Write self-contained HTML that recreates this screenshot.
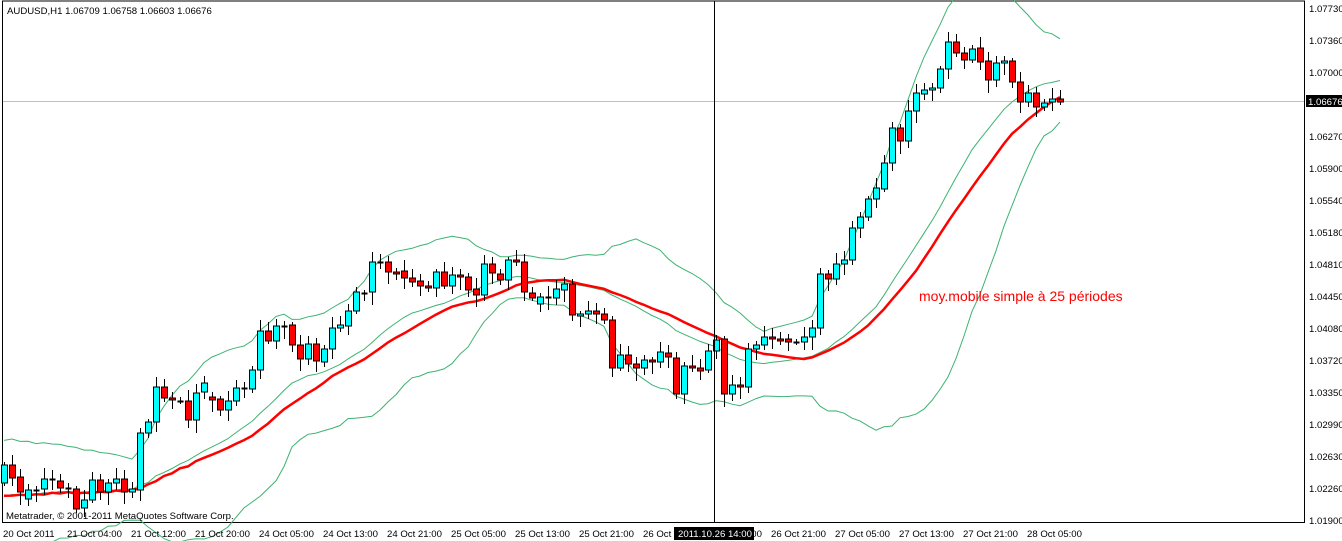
<!DOCTYPE html>
<html><head><meta charset="utf-8"><style>
html,body{margin:0;padding:0;background:#fff;}
body{width:1342px;height:541px;overflow:hidden;position:relative;font-family:"Liberation Sans",sans-serif;}
svg{position:absolute;left:0;top:0;}
text{font-family:"Liberation Sans",sans-serif;font-size:9.6px;fill:#000;}
</style></head><body>
<svg id="s" width="1342" height="541" xmlns="http://www.w3.org/2000/svg">
<rect x="0" y="0" width="1342" height="541" fill="#fff"/>
<line x1="2" y1="1" x2="1305" y2="1" stroke="#000"/>
<line x1="2.5" y1="1" x2="2.5" y2="523" stroke="#000"/>
<line x1="1304.5" y1="1" x2="1304.5" y2="523" stroke="#000"/>
<line x1="2" y1="522.5" x2="1305" y2="522.5" stroke="#000"/>
<line x1="3" y1="101.5" x2="1304" y2="101.5" stroke="#c0c0c0"/>
<g id="bands"></g>
<g id="cd"></g>
<line x1="714.5" y1="1" x2="714.5" y2="523" stroke="#000"/>
<text x="7" y="14">AUDUSD,H1  1.06709 1.06758 1.06603 1.06676</text>
<text x="6" y="519">Metatrader, © 2001-2011 MetaQuotes Software Corp.</text>
<text x="919" y="301" style="font-family:'Liberation Sans',sans-serif;font-size:14px;fill:#ff0000">moy.mobile simple à 25 périodes</text>
<g>
<text x="1309" y="12">1.07730</text>
<text x="1309" y="44">1.07360</text>
<text x="1309" y="76">1.07000</text>
<text x="1309" y="140">1.06270</text>
<text x="1309" y="172">1.05900</text>
<text x="1309" y="204">1.05540</text>
<text x="1309" y="236">1.05180</text>
<text x="1309" y="268">1.04810</text>
<text x="1309" y="300">1.04450</text>
<text x="1309" y="332">1.04080</text>
<text x="1309" y="364">1.03720</text>
<text x="1309" y="396">1.03350</text>
<text x="1309" y="428">1.02990</text>
<text x="1309" y="460">1.02630</text>
<text x="1309" y="492">1.02260</text>
<text x="1309" y="524">1.01900</text>
</g>
<rect x="1306" y="95" width="36" height="12" fill="#000"/>
<text x="1308" y="105" style="fill:#fff">1.06676</text>
<g>
<text x="3" y="537">20 Oct 2011</text>
<text x="67" y="537">21 Oct 04:00</text>
<text x="131" y="537">21 Oct 12:00</text>
<text x="195" y="537">21 Oct 20:00</text>
<text x="259" y="537">24 Oct 05:00</text>
<text x="323" y="537">24 Oct 13:00</text>
<text x="387" y="537">24 Oct 21:00</text>
<text x="451" y="537">25 Oct 05:00</text>
<text x="515" y="537">25 Oct 13:00</text>
<text x="579" y="537">25 Oct 21:00</text>
<text x="643" y="537">26 Oct 06:00</text>
<text x="707" y="537">26 Oct 14:00</text>
<text x="771" y="537">26 Oct 21:00</text>
<text x="835" y="537">27 Oct 05:00</text>
<text x="899" y="537">27 Oct 13:00</text>
<text x="963" y="537">27 Oct 21:00</text>
<text x="1027" y="537">28 Oct 05:00</text>
</g>
<rect x="674" y="527" width="80" height="13" fill="#000"/>
<text x="678" y="537" style="fill:#fff">2011.10.26 14:00</text>
</svg>
<script>
var C=[[483,465],[465,478],[477,492],[499,490],[490,490],[489,479],[479,479],[481,488],[488,488],[489,509],[508,500],[500,480],[480,492],[492,483],[483,479],[479,492],[492,489],[490,433],[433,422],[422,387],[387,398],[398,400],[401,401],[401,420],[420,393],[392,383],[397,400],[399,410],[410,401],[401,388],[388,388],[389,370],[370,331],[331,341],[341,326],[326,326],[325,345],[345,359],[359,344],[344,361],[362,349],[349,328],[328,325],[326,311],[311,292],[293,293],[292,262],[262,262],[262,272],[272,274],
[271,278],[278,282],[281,286],[286,288],[288,272],[272,286],[286,275],[275,277],[277,290],[289,295],[295,264],[264,273],[274,280],[280,260],[260,262],[262,292],[293,298],[304,297],[297,297],[298,289],[290,284],[284,315],[316,314],[314,311],[311,314],[314,320],[320,368],[368,355],[355,364],[364,368],[368,360],[360,362],[362,352],[353,357],[358,394],[394,366],[366,368],[368,371],[370,351],[351,340],[339,394],[394,385],[385,387],[387,349],[349,345],[345,337],[337,339],[339,341],[339,342],[342,342],
[342,337],[337,328],[328,274],[274,279],[279,264],[264,260],[260,228],[228,217],[217,199],[199,188],[189,163],[163,128],[128,141],[141,111],[111,93],[94,90],[90,88],[88,69],[69,42],[42,53],[53,60],[60,49],[48,62],[61,80],[80,63],[63,61],[61,82],[82,102],[102,93],[93,107],[107,103],[102,99],[99,102]];
var cd='',n=C.length;
for(var i=0;i<n;i++){var x=4+i*8+0.5,o=C[i][0],c=C[i][1],t=Math.min(o,c),b=Math.max(o,c);
var h=t-3-((i*7)%9),l=b+3+((i*5)%11);
cd+='<line x1="'+x+'" y1="'+h+'" x2="'+x+'" y2="'+l+'" stroke="#000"/>';
if(b-t<1){cd+='<line x1="'+(x-3)+'" y1="'+(t+0.5)+'" x2="'+(x+3)+'" y2="'+(t+0.5)+'" stroke="#000" stroke-width="2"/>';}
else cd+='<rect x="'+(x-3)+'" y="'+t+'" width="6" height="'+(b-t)+'" fill="'+(c<o?'#00ffff':'#ff0000')+'" stroke="#000"/>';}
document.getElementById('cd').innerHTML=cd;
var pre=[];for(var k=0;k<30;k++)pre.push(497+((k%2)?28:-28)*(k>9?1:0.6));
var all=pre.concat(C.map(function(a){return a[1]}));
var ma='',up='',mid='',lo='';
for(var i=0;i<n;i++){var j=i+30,x=4+i*8;
var s=0;for(var k=j-24;k<=j;k++)s+=all[k];var m=s/25;
var s2=0;for(var k=j-19;k<=j;k++)s2+=all[k];var m2=s2/20;
var v=0;for(var k=j-19;k<=j;k++)v+=(all[k]-m2)*(all[k]-m2);var sd=Math.sqrt(v/20);
ma+=(i?'L':'M')+x+' '+m.toFixed(1);mid+=(i?'L':'M')+x+' '+m2.toFixed(1);
up+=(i?'L':'M')+x+' '+(m2-2*sd).toFixed(1);lo+=(i?'L':'M')+x+' '+(m2+2*sd).toFixed(1);}
document.getElementById('bands').innerHTML='<path d="'+up+'" fill="none" stroke="#3cb371"/><path d="'+mid+'" fill="none" stroke="#3cb371"/><path d="'+lo+'" fill="none" stroke="#3cb371"/><path d="'+ma+'" fill="none" stroke="#ff0000" stroke-width="2.5"/>';
</script>
</body></html>
